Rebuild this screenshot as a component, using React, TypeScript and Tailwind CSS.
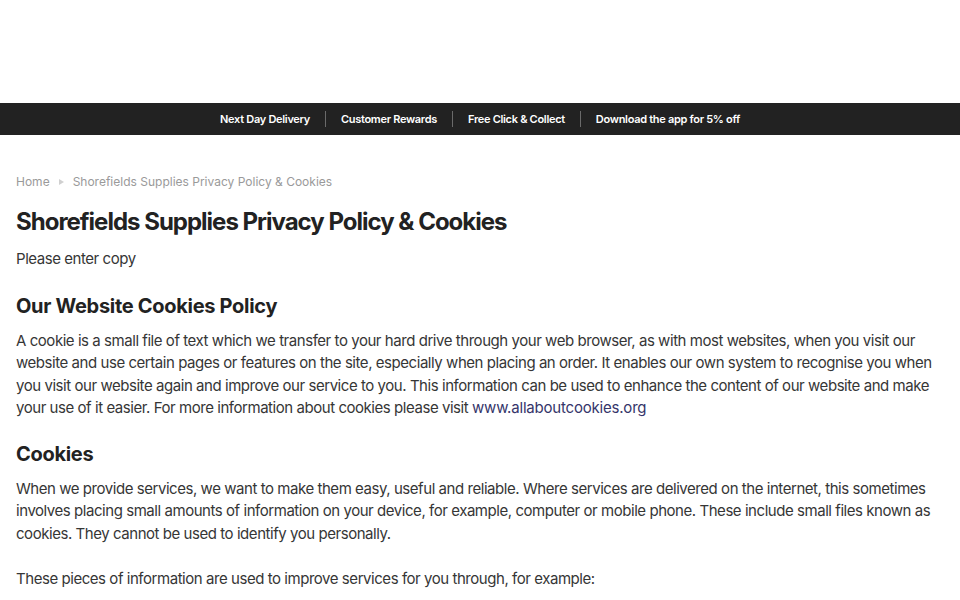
import React from "react";

const font = { fontFamily: "Inter, 'Noto Sans', sans-serif" };

export default function App() {
  const items = ["Next Day Delivery", "Customer Rewards", "Free Click & Collect", "Download the app for 5% off"];
  return (
    <div className="min-h-[600px] bg-white text-[#363636]" style={font}>
      <div className="h-[103px] bg-white" />
      <div className="h-[32px] bg-[#222222] flex items-center justify-center">
        {items.map((t, i) => (
          <div key={t} className="flex items-center">
            {i > 0 && <div className="w-px h-[16px] bg-[#6a6a6a] mx-[15px]" />}
            <span className="text-[11px] font-semibold text-white tracking-[-0.3px]">{t}</span>
          </div>
        ))}
      </div>
      <div className="px-4 pt-[38px]">
        <div className="flex items-center gap-[9px] text-[12px] text-[#9a9a9a] tracking-[0px] h-[18px]">
          <span>Home</span>
          <svg width="5" height="6" viewBox="0 0 5 6"><path d="M0 0L5 3L0 6Z" fill="#d0d0d0" /></svg>
          <span>Shorefields Supplies Privacy Policy &amp; Cookies</span>
        </div>
        <h1 className="mt-[16px] text-[24px] leading-[30px] font-bold text-[#222] tracking-[-1px]">
          Shorefields Supplies Privacy Policy &amp; Cookies
        </h1>
        <p className="mt-[11px] text-[15px] leading-[22.5px] tracking-[-0.45px]">Please enter copy</p>
        <h2 className="mt-[22px] text-[20px] leading-[26px] font-bold text-[#222] tracking-[-0.3px]">Our Website Cookies Policy</h2>
        <p className="mt-[11px] text-[15px] leading-[22.5px] tracking-[-0.45px]">
          A cookie is a small file of text which we transfer to your hard drive through your web browser, as with most websites, when you visit our website and use certain pages or features on the site, especially when placing an order. It enables our own system to recognise you when you visit our website again and improve our service to you. This information can be used to enhance the content of our website and make your use of it easier. For more information about cookies please visit{" "}
          <span className="text-[#35356a] tracking-[-0.2px]">www.allaboutcookies.org</span>
        </p>
        <h2 className="mt-[21px] text-[20px] leading-[26px] font-bold text-[#222] tracking-[-0.3px]">Cookies</h2>
        <p className="mt-[11px] text-[15px] leading-[22.5px] tracking-[-0.45px]">
          When we provide services, we want to make them easy, useful and reliable. Where services are delivered on the internet, this sometimes involves placing small amounts of information on your device, for example, computer or mobile phone. These include small files known as cookies. They cannot be used to identify you personally.
        </p>
        <p className="mt-[22.5px] text-[15px] leading-[22.5px] tracking-[-0.45px]">
          These pieces of information are used to improve services for you through, for example:
        </p>
      </div>
    </div>
  );
}
